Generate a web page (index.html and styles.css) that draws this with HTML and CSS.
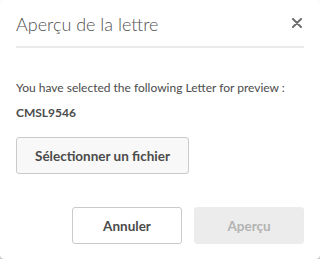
FILE: index.html
```html
<!DOCTYPE html>
<html lang="fr">
<head>
    <meta charset="UTF-8">
    <title>Aperçu de la lettre</title>
    <link rel="stylesheet" href="styles.css">
</head>
<body>
    <div class="dialog">
        <div class="dialog-header">
            <h2>Aperçu de la lettre</h2>
            <button class="close" aria-label="Fermer">
                <svg width="10" height="10" viewBox="0 0 10 10">
                    <path d="M1 1L9 9M9 1L1 9" stroke="#6e6e6e" stroke-width="2" stroke-linecap="round"/>
                </svg>
            </button>
        </div>
        <div class="dialog-body">
            <p class="intro">You have selected the following Letter for preview :</p>
            <p class="letter-name">CMSL9546</p>
            <button class="btn">Sélectionner un fichier</button>
        </div>
        <div class="dialog-footer">
            <button class="btn btn-wide">Annuler</button>
            <button class="btn btn-wide" disabled>Aperçu</button>
        </div>
    </div>
</body>
</html>
```

FILE: styles.css
```css
body {
    margin: 0;
    background: #ffffff;
    font-family: Lato, "Liberation Sans", sans-serif;
    color: #4b4b4b;
}
.dialog {
    width: 320px;
    height: 259px;
    box-sizing: border-box;
    background: #fff;
    border-radius: 4px;
    box-shadow: 0 1px 1px rgba(0, 0, 0, 0.45);
    display: flex;
    flex-direction: column;
}
.dialog-header {
    display: flex;
    align-items: center;
    justify-content: space-between;
    margin: 0 16px;
    height: 48px;
    border-bottom: 2px solid #eaeaea;
    box-sizing: border-box;
}
.dialog-header h2 {
    margin: 0;
    font-weight: 300;
    font-size: 18px;
    color: #505050;
    padding-top: 2px;
}
.close {
    border: none;
    background: none;
    padding: 0;
    margin-right: 2px;
    display: flex;
}
.dialog-body {
    padding: 32px 16px 0;
}
.intro {
    margin: 0;
    font-size: 12px;
    line-height: 15px;
}
.letter-name {
    margin: 10px 0 0;
    font-size: 12px;
    font-weight: 700;
    line-height: 15px;
}
.btn {
    font-family: inherit;
    font-size: 13.5px;
    font-weight: 700;
    color: #4b4b4b;
    background: #f8f8f8;
    border: 1px solid #cacaca;
    border-radius: 3px;
    height: 37px;
    padding: 0 10px;
    white-space: nowrap;
}
.dialog-body .btn {
    margin-top: 17px;
    width: 173px;
}
.dialog-footer {
    display: flex;
    justify-content: flex-end;
    gap: 12px;
    padding: 33px 16px 0;
}
.btn-wide {
    width: 110px;
    background: #fff;
}
.btn:disabled {
    background: #ececec;
    border-color: #ececec;
    color: #b3b3b3;
}
```
